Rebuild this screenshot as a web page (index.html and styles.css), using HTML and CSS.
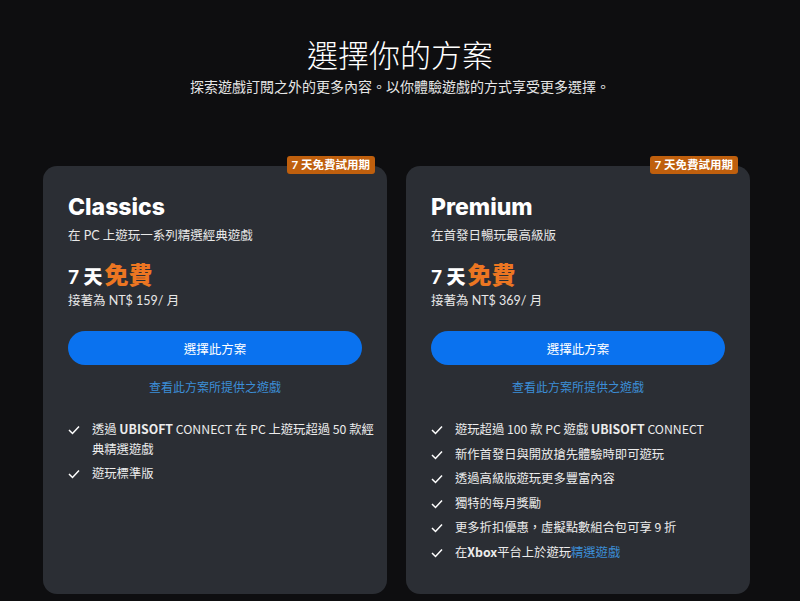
FILE: index.html
```html
<!DOCTYPE html>
<html lang="zh-Hant">
<head>
  <meta charset="UTF-8">
  <title>選擇你的方案</title>
  <link rel="stylesheet" href="styles.css">
</head>
<body>
  <header class="intro">
    <h1>選擇你的方案</h1>
    <p>探索遊戲訂閱之外的更多內容。以你體驗遊戲的方式享受更多選擇。</p>
  </header>

  <main class="plans">
    <section class="plan">
      <span class="badge">7 天免費試用期</span>
      <h2>Classics</h2>
      <p class="desc">在 PC 上遊玩一系列精選經典遊戲</p>
      <p class="price">7 天<em>免費</em></p>
      <p class="then">接著為 NT$ 159/ 月</p>
      <button class="choose">選擇此方案</button>
      <a class="games" href="#">查看此方案所提供之遊戲</a>
      <ul class="perks">
        <li><svg viewBox="0 0 12 10"><polyline points="1,5 4.5,8.5 11,1.5"/></svg><span>透過 <b>UBISOFT</b> CONNECT 在 PC 上遊玩超過 50 款經典精選遊戲</span></li>
        <li><svg viewBox="0 0 12 10"><polyline points="1,5 4.5,8.5 11,1.5"/></svg><span>遊玩標準版</span></li>
      </ul>
    </section>

    <section class="plan">
      <span class="badge">7 天免費試用期</span>
      <h2>Premium</h2>
      <p class="desc">在首發日暢玩最高級版</p>
      <p class="price">7 天<em>免費</em></p>
      <p class="then">接著為 NT$ 369/ 月</p>
      <button class="choose">選擇此方案</button>
      <a class="games" href="#">查看此方案所提供之遊戲</a>
      <ul class="perks">
        <li><svg viewBox="0 0 12 10"><polyline points="1,5 4.5,8.5 11,1.5"/></svg><span>遊玩超過 100 款 PC 遊戲 <b>UBISOFT</b> CONNECT</span></li>
        <li><svg viewBox="0 0 12 10"><polyline points="1,5 4.5,8.5 11,1.5"/></svg><span>新作首發日與開放搶先體驗時即可遊玩</span></li>
        <li><svg viewBox="0 0 12 10"><polyline points="1,5 4.5,8.5 11,1.5"/></svg><span>透過高級版遊玩更多豐富內容</span></li>
        <li><svg viewBox="0 0 12 10"><polyline points="1,5 4.5,8.5 11,1.5"/></svg><span>獨特的每月獎勵</span></li>
        <li><svg viewBox="0 0 12 10"><polyline points="1,5 4.5,8.5 11,1.5"/></svg><span>更多折扣優惠，虛擬點數組合包可享 9 折</span></li>
        <li><svg viewBox="0 0 12 10"><polyline points="1,5 4.5,8.5 11,1.5"/></svg><span>在<b>Xbox</b>平台上於遊玩<a href="#">精選遊戲</a></span></li>
      </ul>
    </section>
  </main>
</body>
</html>
```

FILE: styles.css
```css
body { margin: 0; background: #0e0e10; color: #fff; font-family: Lato, "Noto Sans CJK TC", sans-serif; overflow: hidden; }

.intro { text-align: center; padding-top: 35px; }
.intro h1 { margin: 0; font-size: 31px; line-height: 40px; font-weight: 300; }
.intro p { margin: 2px 0 0; font-size: 14px; line-height: 20px; color: #e6e6e6; }

.plans { display: flex; gap: 19px; padding: 0 50px 0 43px; margin-top: 69px; }
.plan { position: relative; flex: 1; height: 428px; box-sizing: border-box; background: #2b2e34; border-radius: 14px; padding: 27px 25px 0; }

.badge { position: absolute; top: -10px; right: 12px; background: #bf5f0d; border-radius: 3px; font-size: 11.5px; font-weight: 700; line-height: 18px; padding: 0 5px; }

.plan h2 { margin: 0; font-family: Inter, sans-serif; font-size: 23px; line-height: 28px; font-weight: 800; }
.desc { margin: 6px 0 0; font-size: 12.5px; line-height: 18px; color: #e8e8e8; }
.price { margin: 15px 0 0; font-size: 19px; line-height: 30px; font-weight: 900; }
.price em { font-style: normal; color: #ec7622; font-size: 24px; margin-left: 2px; }
.then { margin: 0; font-size: 12.5px; line-height: 18px; color: #e8e8e8; }

.choose { display: block; width: 100%; height: 34px; margin-top: 21px; border: none; border-radius: 17px; background: #0a72ef; color: #fff; font: inherit; font-size: 12.5px; }
.games { display: block; margin-top: 14px; text-align: center; font-size: 12px; line-height: 18px; color: #3c8ed8; text-decoration: none; }

.perks { list-style: none; margin: 23px -14px 0 0; padding: 0; font-family: "Noto Sans CJK TC", sans-serif; }
.perks li { display: flex; gap: 12px; font-size: 12.3px; line-height: 19.5px; margin-bottom: 5px; color: #ececec; }
.perks svg { flex: none; width: 12px; height: 10px; margin-top: 5px; fill: none; stroke: #fff; stroke-width: 1.5; }
.perks b { font-weight: 700; }
.perks a { color: #3c8ed8; text-decoration: none; }
```
